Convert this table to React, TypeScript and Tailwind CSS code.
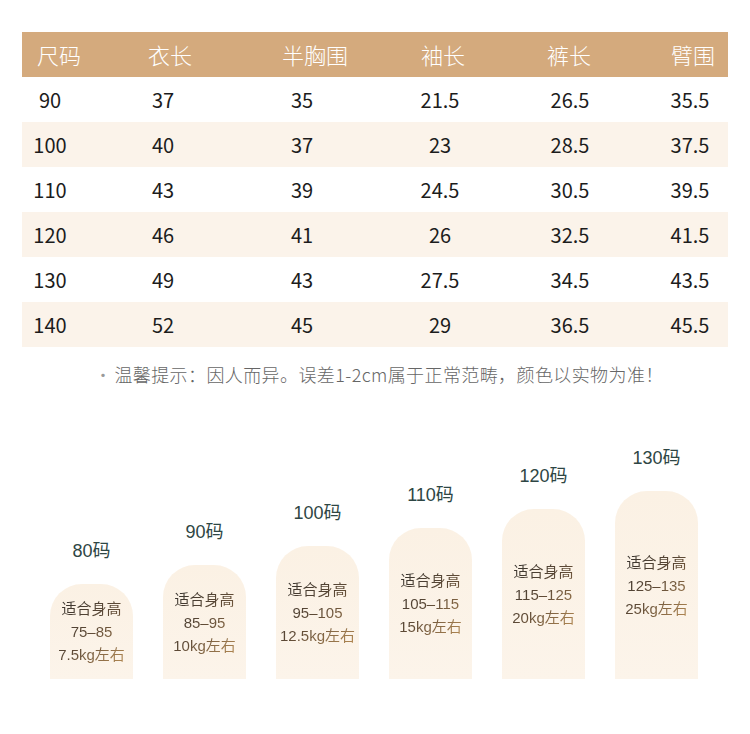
import React from 'react'

const font = { fontFamily: '"Noto Sans CJK SC", "Noto Sans", sans-serif' }
const roundFont = { fontFamily: '"Liberation Sans", "Noto Sans CJK SC", sans-serif' }

const headers = ['尺码', '衣长', '半胸围', '袖长', '裤长', '臂围']
// margin before each header cell (cells are 56px wide, centred text)
const headerMl = ['ml-[9px]', 'ml-[55px]', 'ml-[84px]', 'ml-[77px]', 'ml-[70px]', 'ml-[68px]']
const cellMl = ['ml-0', 'ml-[57px]', 'ml-[83px]', 'ml-[82px]', 'ml-[74px]', 'ml-[64px]']

const rows = [
  ['90', '37', '35', '21.5', '26.5', '35.5'],
  ['100', '40', '37', '23', '28.5', '37.5'],
  ['110', '43', '39', '24.5', '30.5', '39.5'],
  ['120', '46', '41', '26', '32.5', '41.5'],
  ['130', '49', '43', '27.5', '34.5', '43.5'],
  ['140', '52', '45', '29', '36.5', '45.5'],
]

const pillars = [
  { size: '80码', h: 'h-[95px]', range: '75–85', kg: '7.5kg左右' },
  { size: '90码', h: 'h-[114px]', range: '85–95', kg: '10kg左右' },
  { size: '100码', h: 'h-[133px]', range: '95–105', kg: '12.5kg左右' },
  { size: '110码', h: 'h-[151px]', range: '105–115', kg: '15kg左右' },
  { size: '120码', h: 'h-[170px]', range: '115–125', kg: '20kg左右' },
  { size: '130码', h: 'h-[188px]', range: '125–135', kg: '25kg左右' },
]

export default function App() {
  return (
    <div className="w-[750px] h-[734px] bg-white overflow-hidden" style={font}>
      <div className="pt-[32px] px-[22px]">
        <div className="flex items-center h-[45px] bg-[#d4aa7d] text-white text-[22px] font-light">
          {headers.map((h, i) => (
            <div key={h} className={`w-[56px] shrink-0 text-center whitespace-nowrap ${headerMl[i]}`}>
              {h}
            </div>
          ))}
        </div>
        {rows.map((r, ri) => (
          <div
            key={r[0]}
            className={`flex items-center h-[45px] text-[20px] text-[#1c1c1c] ${ri % 2 === 1 ? 'bg-[#fbf3ea]' : 'bg-white'}`}
          >
            {r.map((c, i) => (
              <div key={i} className={`w-[56px] shrink-0 text-center ${cellMl[i]}`}>
                {c}
              </div>
            ))}
          </div>
        ))}
      </div>

      <div className="mt-[13px] pl-[94px] flex items-center text-[18px] text-[#666] leading-[28px] font-light tracking-[0.4px]">
        <span className="text-[#999] mr-[2px]">•</span>
        <span>温馨提示：因人而异。误差1-2cm属于正常范畴，颜色以实物为准！</span>
      </div>

      <div className="mt-[53px] pl-[50px] flex items-end gap-[30px] h-[238px]">
        {pillars.map((p) => (
          <div key={p.size} className="flex flex-col items-center w-[83px]">
            <div
              className="text-[18px] text-[#2e4644] leading-[24px] mb-[21px] whitespace-nowrap"
              style={roundFont}
            >
              {p.size}
            </div>
            <div
              className={`w-[83px] ${p.h} rounded-t-[32px] bg-linear-to-b from-[#fbf1e4] to-[#fcf4ea] flex flex-col items-center justify-center`}
            >
              <div
                className="flex flex-col items-center text-[15px] leading-[23px] whitespace-nowrap bg-linear-to-br from-[#35322e] via-[#5e4a36] to-[#b88d55] bg-clip-text text-transparent"
                style={roundFont}
              >
                <span>适合身高</span>
                <span>{p.range}</span>
                <span>{p.kg}</span>
              </div>
            </div>
          </div>
        ))}
      </div>
    </div>
  )
}
